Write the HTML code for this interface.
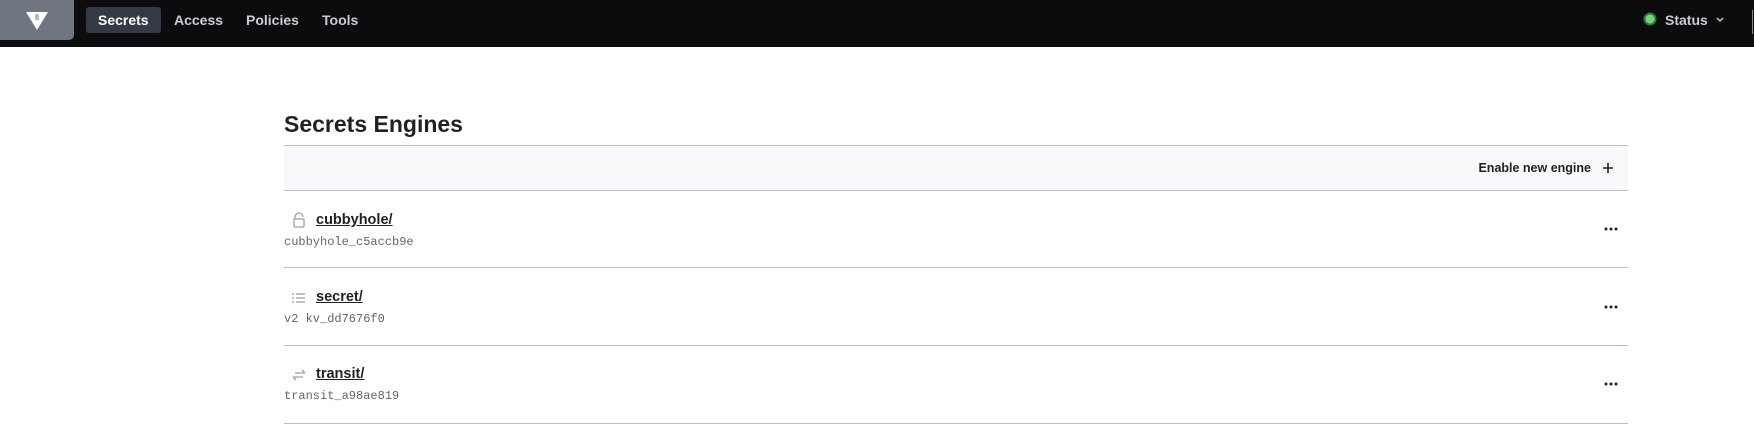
<!DOCTYPE html>
<html><head><style>
*{margin:0;padding:0;box-sizing:border-box}
body{width:1754px;height:437px;background:#fff;font-family:"Liberation Sans",sans-serif;overflow:hidden;position:relative}
.nav{position:absolute;left:0;top:0;width:1754px;height:47px;background:#0c0c0e}
.logo{position:absolute;left:0;top:0;width:74px;height:40px;background:#6f7682;border-radius:0 0 5px 0}
.n{position:absolute;top:7px;height:26px;line-height:26px;color:#c9ccd1;font-size:14px;font-weight:bold}
.sel{background:#343a45;color:#fff;border-radius:3px;padding:0 12px}
.t{position:absolute;left:284px;top:111px;font-size:23px;font-weight:bold;color:#1f2124}
.box{position:absolute;left:284px;top:145px;width:1344px;height:46px;background:#f9f9fb;border-top:1px solid #b9c0cb;border-bottom:1px solid #b9c0cb}
.en{position:absolute;right:37px;top:15px;font-size:12.5px;font-weight:bold;color:#1f2124}
.plus{position:absolute;right:14px;top:16px}
.sep{position:absolute;left:284px;width:1344px;height:1px;background:#b9c0cb}
.lk{position:absolute;left:316px;font-size:14.5px;font-weight:bold;color:#1f2124;text-decoration:underline}
.mono{position:absolute;left:284px;font-family:"Liberation Mono",monospace;font-size:12px;color:#5f6570}
.dots{position:absolute;left:1604px}
.ic{position:absolute;left:291px}
</style></head><body>
<div class="nav">
 <div class="logo"><svg width="74" height="40"><polygon points="26,12 48,12 37,30" fill="#fff"/><g stroke="#6f7682" stroke-width="1"><line x1="35" y1="15" x2="39" y2="15"/><line x1="35" y1="17" x2="39" y2="17"/><line x1="35" y1="19" x2="39" y2="19"/></g></svg></div>
 <div class="n sel" style="left:86px">Secrets</div>
 <div class="n" style="left:174px">Access</div>
 <div class="n" style="left:246px">Policies</div>
 <div class="n" style="left:322px">Tools</div>
 <svg style="position:absolute;left:1643px;top:12px" width="14" height="14"><circle cx="7" cy="7" r="5.5" fill="#6fd47e" stroke="#2b7a36" stroke-width="2"/></svg>
 <div class="n" style="left:1665px">Status</div>
 <svg style="position:absolute;left:1715px;top:16px" width="10" height="8"><path d="M2 2 L5 5 L8 2" fill="none" stroke="#c9ccd1" stroke-width="1.5"/></svg>
 <div style="position:absolute;left:1752px;top:10px;width:1px;height:24px;background:#888"></div>
</div>
<div class="t">Secrets Engines</div>
<div class="box"><span class="en">Enable new engine</span><svg class="plus" width="12" height="12"><path d="M6 1V11M1 6H11" stroke="#1f2124" stroke-width="1.6"/></svg></div>

<svg class="ic" style="top:212px" width="16" height="16"><path d="M4 7 V5 a4 4 0 0 1 8 0" fill="none" stroke="#9aa0aa" stroke-width="1.3"/><rect x="3" y="7" width="10" height="8" rx="1" fill="none" stroke="#9aa0aa" stroke-width="1.3"/></svg>
<a class="lk" style="top:212px">cubbyhole/</a>
<div class="mono" style="top:235px">cubbyhole_c5accb9e</div>
<svg class="dots" style="top:227px" width="14" height="4"><circle cx="2" cy="2" r="1.5" fill="#1f2124"/><circle cx="7" cy="2" r="1.5" fill="#1f2124"/><circle cx="12" cy="2" r="1.5" fill="#1f2124"/></svg>
<div class="sep" style="top:267px"></div>

<svg class="ic" style="top:290px" width="16" height="16"><g stroke="#9aa0aa" stroke-width="1.3"><line x1="1" y1="4" x2="3" y2="4"/><line x1="5" y1="4" x2="14" y2="4"/><line x1="1" y1="8" x2="3" y2="8"/><line x1="5" y1="8" x2="14" y2="8"/><line x1="1" y1="12" x2="3" y2="12"/><line x1="5" y1="12" x2="14" y2="12"/></g></svg>
<a class="lk" style="top:289px">secret/</a>
<div class="mono" style="top:312px">v2 kv_dd7676f0</div>
<svg class="dots" style="top:305px" width="14" height="4"><circle cx="2" cy="2" r="1.5" fill="#1f2124"/><circle cx="7" cy="2" r="1.5" fill="#1f2124"/><circle cx="12" cy="2" r="1.5" fill="#1f2124"/></svg>
<div class="sep" style="top:345px"></div>

<svg class="ic" style="top:367px" width="16" height="16"><g fill="none" stroke="#9aa0aa" stroke-width="1.3"><path d="M4 6 H14 M11 3 L14 6"/><path d="M12 10 H2 M5 13 L2 10"/></g></svg>
<a class="lk" style="top:366px">transit/</a>
<div class="mono" style="top:389px">transit_a98ae819</div>
<svg class="dots" style="top:382px" width="14" height="4"><circle cx="2" cy="2" r="1.5" fill="#1f2124"/><circle cx="7" cy="2" r="1.5" fill="#1f2124"/><circle cx="12" cy="2" r="1.5" fill="#1f2124"/></svg>
<div class="sep" style="top:423px"></div>
</body></html>
